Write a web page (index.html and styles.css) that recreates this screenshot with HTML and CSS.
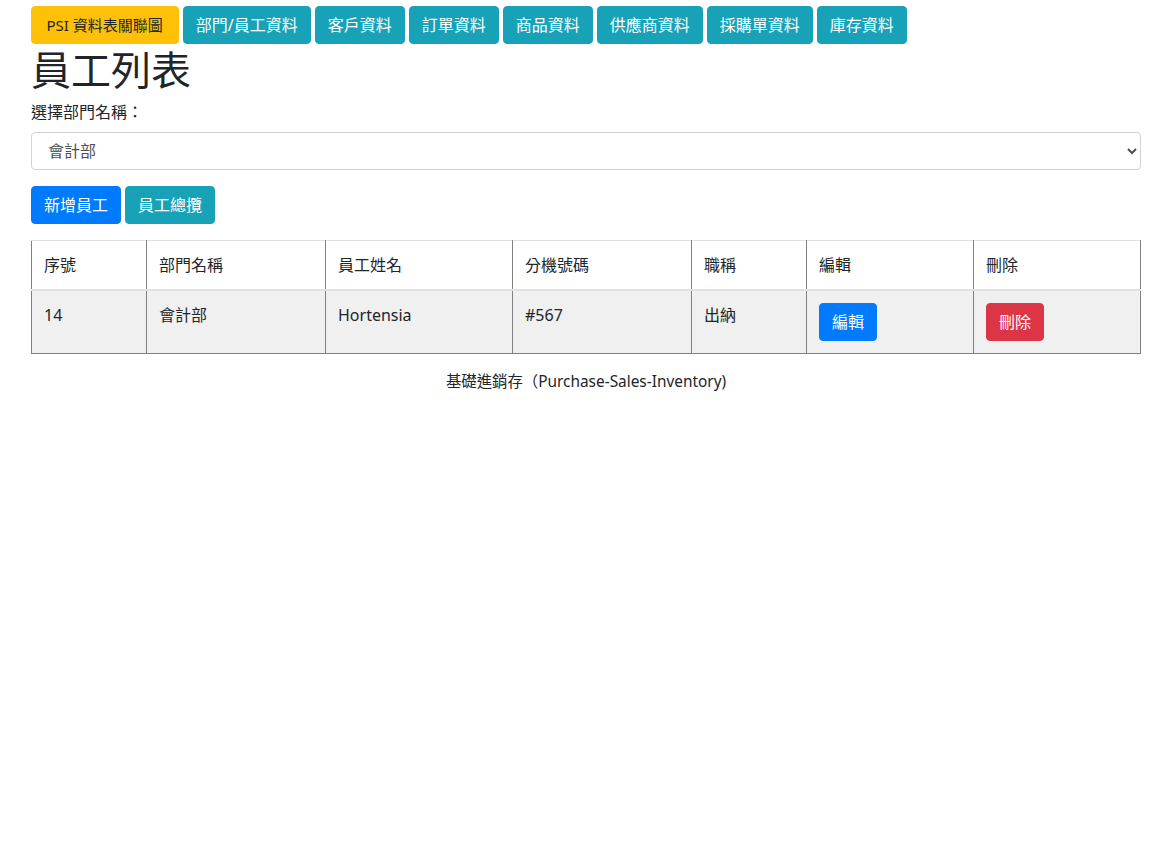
FILE: index.html
```html
<!DOCTYPE html>
<html lang="zh-Hant">
<head>
<meta charset="utf-8">
<title>員工列表</title>
<link rel="stylesheet" href="styles.css">
</head>
<body>
<div class="container">
  <nav class="topnav">
    <a class="btn btn-warning" href="#">PSI 資料表關聯圖</a>
    <a class="btn btn-info" href="#">部門/員工資料</a>
    <a class="btn btn-info" href="#">客戶資料</a>
    <a class="btn btn-info" href="#">訂單資料</a>
    <a class="btn btn-info" href="#">商品資料</a>
    <a class="btn btn-info" href="#">供應商資料</a>
    <a class="btn btn-info" href="#">採購單資料</a>
    <a class="btn btn-info" href="#">庫存資料</a>
  </nav>
  <h1 class="title">員工列表</h1>
  <div class="form-group">
    <label class="label">選擇部門名稱：</label>
    <div class="select-wrap">
      <select class="form-control">
        <option>會計部</option>
      </select>
    </div>
  </div>
  <div class="actions">
    <a class="btn btn-primary" href="#">新增員工</a>
    <a class="btn btn-info" href="#">員工總攬</a>
  </div>
  <table class="table">
    <thead>
      <tr>
        <th class="c1">序號</th>
        <th class="c2">部門名稱</th>
        <th class="c3">員工姓名</th>
        <th class="c4">分機號碼</th>
        <th class="c5">職稱</th>
        <th class="c6">編輯</th>
        <th class="c7">刪除</th>
      </tr>
    </thead>
    <tbody>
      <tr>
        <td>14</td>
        <td>會計部</td>
        <td>Hortensia</td>
        <td>#567</td>
        <td>出納</td>
        <td><a class="btn btn-primary" href="#">編輯</a></td>
        <td><a class="btn btn-danger" href="#">刪除</a></td>
      </tr>
    </tbody>
  </table>
  <footer class="footer">基礎進銷存（Purchase-Sales-Inventory)</footer>
</div>
</body>
</html>
```

FILE: styles.css
```css
* { box-sizing: border-box; }
html, body { margin: 0; padding: 0; background: #fff; }
body {
  font-family: "Noto Sans", "Noto Sans CJK TC", sans-serif;
  font-size: 16px;
  line-height: 1.5;
  color: #212529;
}
.container {
  padding: 6px 16px 0 31px;
}
.topnav {
  display: flex;
  gap: 4px;
  flex-wrap: wrap;
}
.btn {
  display: inline-block;
  height: 38px;
  padding: 6px 12px;
  font-size: 16px;
  line-height: 24px;
  border: 1px solid transparent;
  border-radius: 4px;
  text-decoration: none;
  white-space: nowrap;
  color: #fff;
}
.topnav .btn { padding: 6px 12px; }
.topnav .btn-warning { color: #212529; font-size: 15px; padding: 6px 15px 6px 14.5px; }
.btn-warning { background: #ffc107; border-color: #ffc107; }
.btn-info { background: #17a2b8; border-color: #17a2b8; }
.btn-primary { background: #007bff; border-color: #007bff; }
.btn-danger { background: #dc3545; border-color: #dc3545; }
.title {
  margin: 2px 0 6px;
  font-size: 40px;
  font-weight: 400;
  line-height: 48px;
}
.form-group { margin-bottom: 16px; }
.label { display: block; margin-bottom: 8px; }
.form-control {
  display: block;
  width: 100%;
  height: 38px;
  padding: 0 8px 0 12px;
  font-family: inherit;
  font-size: 16px;
  color: #495057;
  background: #fff;
  border: 1px solid #ced4da;
  border-radius: 4px;
}
.actions {
  display: flex;
  gap: 4px;
  margin-bottom: 16px;
}
.table {
  width: 100%;
  border-collapse: collapse;
  margin-bottom: 16px;
}
.table th, .table td {
  text-align: left;
  vertical-align: top;
  padding: 12px;
  border-left: 1px solid #808080;
  border-right: 1px solid #808080;
  font-weight: 400;
}
.table th {
  border-top: 1px solid #dee2e6;
  border-bottom: 2px solid #dee2e6;
  line-height: 24px;
}
.table td {
  background: #f0f0f0;
  border-bottom: 1px solid #808080;
  line-height: 24px;
}
.c1 { width: 115px; }
.c2 { width: 179px; }
.c3 { width: 187px; }
.c4 { width: 179px; }
.c5 { width: 115px; }
.c6 { width: 167px; }
.footer {
  text-align: center;
  line-height: 24px;
  font-size: 15.4px;
}
```
